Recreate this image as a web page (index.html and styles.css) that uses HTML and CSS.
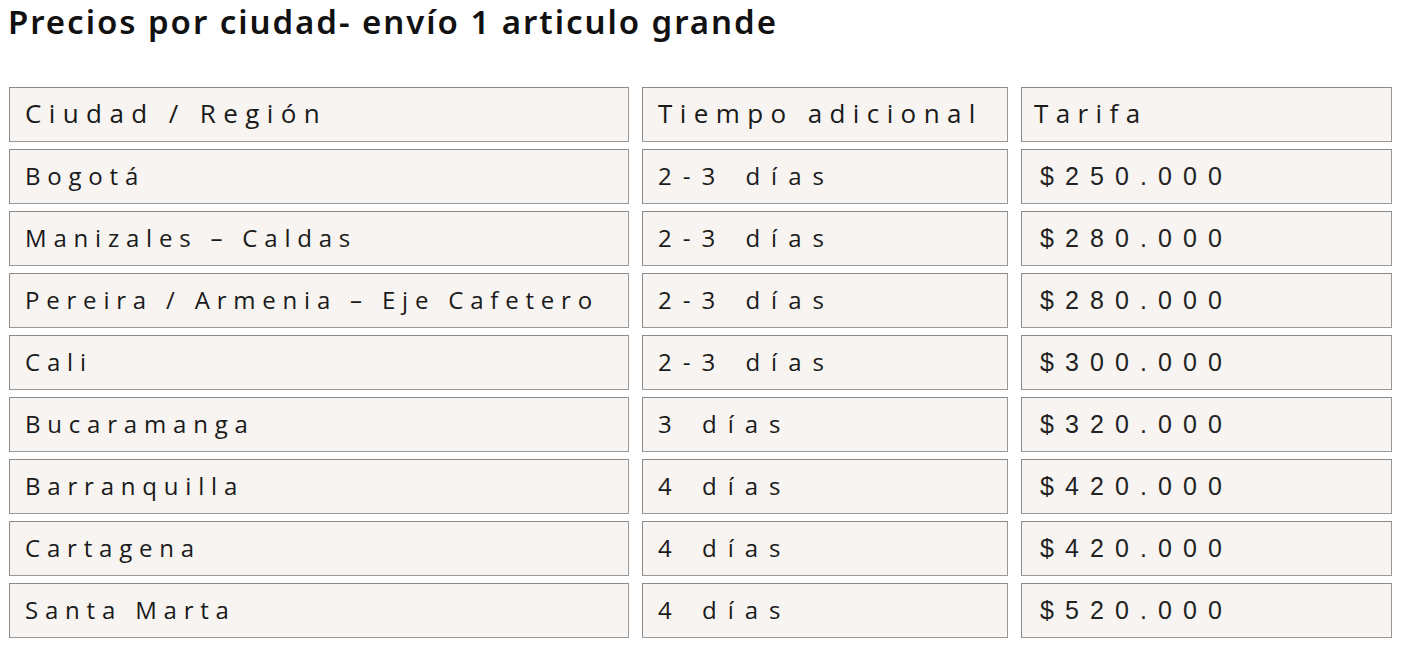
FILE: index.html
```html
<!DOCTYPE html>
<html lang="es">
<head>
<meta charset="utf-8">
<title>Precios por ciudad</title>
<link rel="stylesheet" href="styles.css">
</head>
<body>
<h1 class="title">Precios por ciudad- envío 1 articulo grande</h1>
<div class="grid">
  <div class="cell head">Ciudad / Región</div>
  <div class="cell head">Tiempo adicional</div>
  <div class="cell head head-rate">Tarifa</div>

  <div class="cell">Bogotá</div>
  <div class="cell days">2-3 días</div>
  <div class="cell price">$250.000</div>

  <div class="cell">Manizales – Caldas</div>
  <div class="cell days">2-3 días</div>
  <div class="cell price">$280.000</div>

  <div class="cell">Pereira / Armenia – Eje Cafetero</div>
  <div class="cell days">2-3 días</div>
  <div class="cell price">$280.000</div>

  <div class="cell">Cali</div>
  <div class="cell days">2-3 días</div>
  <div class="cell price">$300.000</div>

  <div class="cell">Bucaramanga</div>
  <div class="cell days">3 días</div>
  <div class="cell price">$320.000</div>

  <div class="cell">Barranquilla</div>
  <div class="cell days">4 días</div>
  <div class="cell price">$420.000</div>

  <div class="cell">Cartagena</div>
  <div class="cell days">4 días</div>
  <div class="cell price">$420.000</div>

  <div class="cell">Santa Marta</div>
  <div class="cell days">4 días</div>
  <div class="cell price">$520.000</div>
</div>
</body>
</html>
```

FILE: styles.css
```css
html, body {
  margin: 0;
  padding: 0;
  background: #ffffff;
}

body {
  padding: 0 0 0 8px;
  font-family: "Open Sans", "Liberation Sans", sans-serif;
  color: #1a1a1a;
}

.title {
  margin: 0;
  padding-top: 4px;
  font-family: "Noto Sans", "Liberation Sans", sans-serif;
  font-weight: 600;
  font-size: 33px;
  line-height: 36px;
  letter-spacing: 1.95px;
  color: #111111;
}

.grid {
  display: grid;
  grid-template-columns: 620px 366px 371px;
  grid-auto-rows: 55px;
  column-gap: 13px;
  row-gap: 7px;
  margin-top: 47px;
  margin-left: 1px;
}

.cell {
  box-sizing: border-box;
  display: flex;
  align-items: center;
  padding: 0 0 2px 15px;
  background: #f7f4f1;
  border: 1px solid #999999;
  border-top-color: #8a8a8a;
  border-left-color: #8a8a8a;
  font-size: 24px;
  letter-spacing: 6.8px;
  color: #1a1a1a;
  white-space: nowrap;
}

.head {
  font-size: 26px;
  letter-spacing: 7.4px;
  padding-bottom: 3px;
}

.head-rate {
  padding-left: 12px;
}

.days {
  letter-spacing: 11px;
  word-spacing: 2px;
}

.price {
  padding-left: 18px;
  padding-bottom: 0;
  font-family: "Liberation Sans", sans-serif;
  font-size: 25px;
  letter-spacing: 11.1px;
  color: #222222;
}
```
